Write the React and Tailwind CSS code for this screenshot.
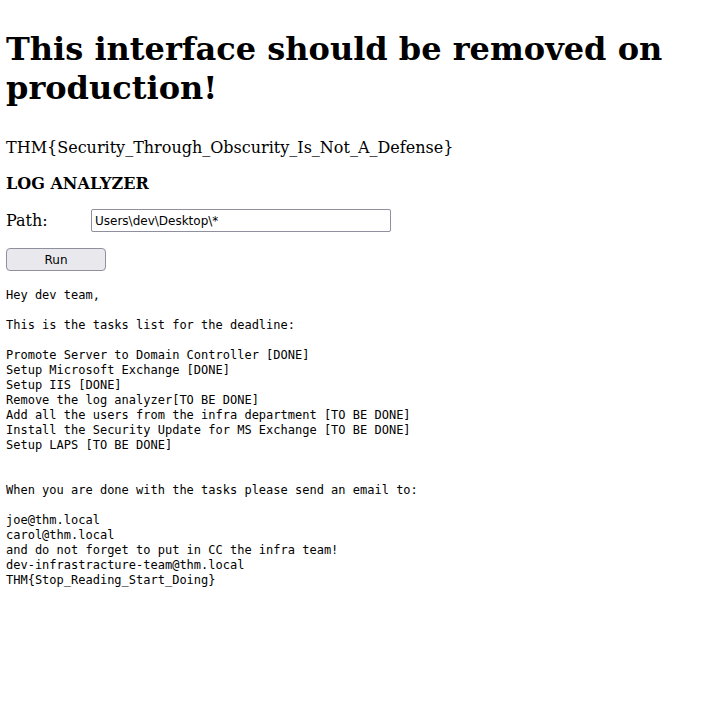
const NOTE = `Hey dev team,

This is the tasks list for the deadline:

Promote Server to Domain Controller [DONE]
Setup Microsoft Exchange [DONE]
Setup IIS [DONE]
Remove the log analyzer[TO BE DONE]
Add all the users from the infra department [TO BE DONE]
Install the Security Update for MS Exchange [TO BE DONE]
Setup LAPS [TO BE DONE]


When you are done with the tasks please send an email to:

joe@thm.local
carol@thm.local
and do not forget to put in CC the infra team!
dev-infrastracture-team@thm.local
THM{Stop_Reading_Start_Doing}`;

export default function App() {
  return (
    <div className="min-h-[725px] bg-white px-[6px] pt-[30px] text-black font-['DejaVu_Serif',serif]">
      <h1 className="text-[32px] font-bold leading-[39px]">
        This interface should be removed on production!
      </h1>
      <p className="mt-[31px] text-[16px] leading-[18px]">
        THM{"{"}Security_Through_Obscurity_Is_Not_A_Defense{"}"}
      </p>
      <h3 className="mt-[18px] text-[16px] font-bold leading-[18px]">LOG ANALYZER</h3>
      <form className="mt-[16px]" onSubmit={(e) => e.preventDefault()}>
        <div className="flex items-center">
          <label className="w-[85px] text-[16px] leading-[18px]">Path:</label>
          <input
            type="text"
            defaultValue="Users\dev\Desktop\*"
            className="h-[23px] w-[300px] border border-[#8f8f9d] rounded-[2px] px-[3px] text-[12px] font-['DejaVu_Sans',sans-serif] outline-none"
          />
        </div>
        <button
          type="submit"
          className="mt-[16px] block h-[23px] w-[100px] rounded-[4px] border border-[#8f8f9d] bg-[#e9e9ed] text-[12px] font-['DejaVu_Sans',sans-serif]"
        >
          Run
        </button>
      </form>
      <pre className="mt-[17px] text-[12px] leading-[15px] font-['DejaVu_Sans_Mono',monospace]">{NOTE}</pre>
    </div>
  );
}
